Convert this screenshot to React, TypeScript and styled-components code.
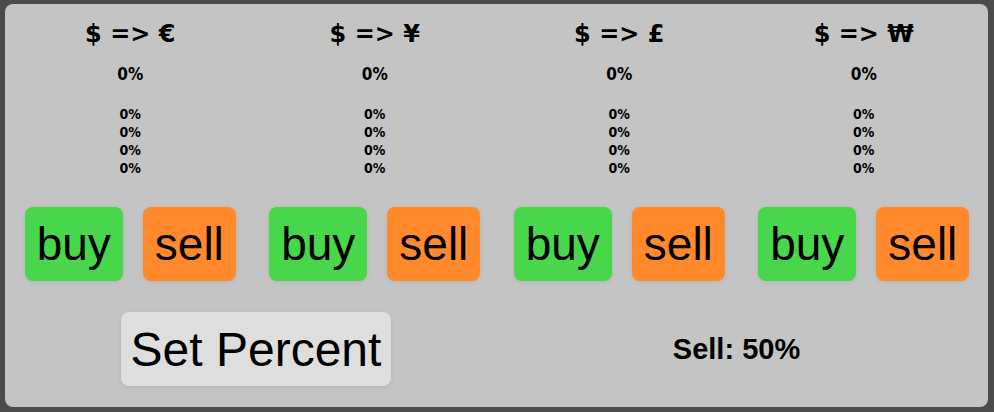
import styled, { createGlobalStyle } from 'styled-components'

const GlobalStyle = createGlobalStyle`
  html, body {
    margin: 0;
    padding: 0;
    background: #4b4b4b;
  }
`

type Pair = { symbol: string }

const pairs: Pair[] = [
  { symbol: '€' },
  { symbol: '¥' },
  { symbol: '£' },
  { symbol: '₩' }
]

const history = ['0%', '0%', '0%', '0%']

const App = () => {
  return (
    <>
      <GlobalStyle />
      <Panel>
        <Pairs>
          {pairs.map((p) => (
            <PairColumn key={p.symbol}>
              <PairTitle>$ =&gt; {p.symbol}</PairTitle>
              <Change>0%</Change>
              <HistoryList>
                {history.map((h, i) => (
                  <HistoryItem key={`history_${i}`}>{h}</HistoryItem>
                ))}
              </HistoryList>
              <Actions>
                <TradeButton kind="buy">buy</TradeButton>
                <TradeButton kind="sell">sell</TradeButton>
              </Actions>
            </PairColumn>
          ))}
        </Pairs>
        <Footer>
          <FooterCell>
            <SetPercentButton>Set Percent</SetPercentButton>
          </FooterCell>
          <FooterCell>
            <SellLabel>Sell: 50%</SellLabel>
          </FooterCell>
        </Footer>
      </Panel>
    </>
  )
}

export default App

const Panel = styled.div`
  box-sizing: border-box;
  margin: 4px 6px 0 5px;
  height: 403px;
  padding: 0 2px 0 3px;
  background: #c4c4c4;
  border-radius: 8px;
  display: flex;
  flex-direction: column;
`
const Pairs = styled.div`
  display: grid;
  grid-template-columns: repeat(4, 1fr);
`
const PairColumn = styled.div`
  display: flex;
  flex-direction: column;
  align-items: center;
  color: #000;
  font-family: 'DejaVu Sans Condensed', 'DejaVu Sans', sans-serif;
`
const PairTitle = styled.div`
  margin-top: 16px;
  font-family: 'DejaVu Sans', sans-serif;
  font-size: 24px;
  font-weight: 700;
  line-height: 28px;
`
const Change = styled.div`
  margin-top: 15px;
  font-size: 17px;
  font-weight: 700;
  line-height: 22px;
`
const HistoryList = styled.div`
  margin-top: 20px;
  display: flex;
  flex-direction: column;
  align-items: center;
`
const HistoryItem = styled.div`
  font-size: 14px;
  font-weight: 700;
  line-height: 18px;
`
const Actions = styled.div`
  margin-top: 30px;
  display: flex;
  gap: 20px;
`
const TradeButton = styled.button<{ kind: 'buy' | 'sell' }>`
  height: 74px;
  padding: 0 12px;
  border: none;
  border-radius: 8px;
  background: ${(props) => (props.kind === 'buy' ? '#48d64a' : '#ff892b')};
  box-shadow: 0 1px 4px rgba(0, 0, 0, 0.08);
  color: #000;
  font-family: 'Liberation Sans', Arial, sans-serif;
  font-size: 46px;
  cursor: pointer;
`
const Footer = styled.div`
  margin-top: 31px;
  display: grid;
  grid-template-columns: 496px 1fr;
  align-items: center;
  padding-right: 17px;
`
const FooterCell = styled.div`
  display: flex;
  justify-content: center;
`
const SetPercentButton = styled.button`
  height: 74px;
  padding: 0 10px;
  border: none;
  border-radius: 8px;
  background: #dedede;
  box-shadow: 0 1px 4px rgba(0, 0, 0, 0.08);
  color: #000;
  font-family: 'Liberation Sans', Arial, sans-serif;
  font-size: 48px;
  cursor: pointer;
`
const SellLabel = styled.div`
  color: #000;
  font-family: 'Liberation Sans', Arial, sans-serif;
  font-size: 29px;
  font-weight: 700;
`
